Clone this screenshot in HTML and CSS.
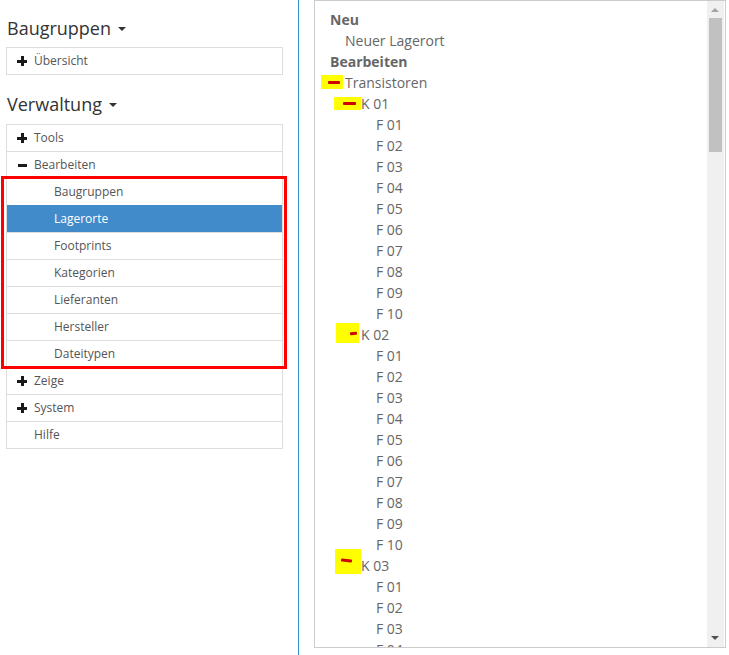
FILE: index.html
```html
<!DOCTYPE html>
<html lang="de">
<head>
    <meta charset="UTF-8">
    <title>Lagerorte</title>
    <link rel="stylesheet" href="styles.css">
</head>
<body>
    <div class="sidebar">
        <h2 class="nav-title">Baugruppen <span class="caret"></span></h2>
        <ul class="nav-list">
            <li><span class="ico plus"></span>Übersicht</li>
        </ul>

        <h2 class="nav-title second">Verwaltung <span class="caret"></span></h2>
        <ul class="nav-list">
            <li><span class="ico plus"></span>Tools</li>
            <li><span class="ico minus"></span>Bearbeiten</li>
            <li class="sub-wrap">
                <ul class="sub-list">
                    <li>Baugruppen</li>
                    <li class="active">Lagerorte</li>
                    <li>Footprints</li>
                    <li>Kategorien</li>
                    <li>Lieferanten</li>
                    <li>Hersteller</li>
                    <li>Dateitypen</li>
                </ul>
            </li>
            <li><span class="ico plus"></span>Zeige</li>
            <li><span class="ico plus"></span>System</li>
            <li class="no-icon">Hilfe</li>
        </ul>
    </div>

    <div class="content">
        <div class="tree-box">
            <div class="tree">
                <div class="t-head">Neu</div>
                <div class="t-item lvl1">Neuer Lagerort</div>
                <div class="t-head">Bearbeiten</div>
                <div class="t-item lvl0"><span class="mark m0"><i></i></span>Transistoren</div>
                <div class="t-item lvl1k"><span class="mark m1"><i></i></span>K 01</div>
                <div class="t-item lvl2">F 01</div>
                <div class="t-item lvl2">F 02</div>
                <div class="t-item lvl2">F 03</div>
                <div class="t-item lvl2">F 04</div>
                <div class="t-item lvl2">F 05</div>
                <div class="t-item lvl2">F 06</div>
                <div class="t-item lvl2">F 07</div>
                <div class="t-item lvl2">F 08</div>
                <div class="t-item lvl2">F 09</div>
                <div class="t-item lvl2">F 10</div>
                <div class="t-item lvl1k"><span class="mark m2"><i></i></span>K 02</div>
                <div class="t-item lvl2">F 01</div>
                <div class="t-item lvl2">F 02</div>
                <div class="t-item lvl2">F 03</div>
                <div class="t-item lvl2">F 04</div>
                <div class="t-item lvl2">F 05</div>
                <div class="t-item lvl2">F 06</div>
                <div class="t-item lvl2">F 07</div>
                <div class="t-item lvl2">F 08</div>
                <div class="t-item lvl2">F 09</div>
                <div class="t-item lvl2">F 10</div>
                <div class="t-item lvl1k"><span class="mark m3"><i></i></span>K 03</div>
                <div class="t-item lvl2">F 01</div>
                <div class="t-item lvl2">F 02</div>
                <div class="t-item lvl2">F 03</div>
                <div class="t-item lvl2">F 04</div>
            </div>
            <div class="scrollbar">
                <div class="arrow up"></div>
                <div class="thumb"></div>
                <div class="track"></div>
                <div class="arrow down"></div>
            </div>
        </div>
    </div>
</body>
</html>
```

FILE: styles.css
```css
* {
    margin: 0;
    padding: 0;
    box-sizing: border-box;
}

body {
    font-family: 'Open Sans', 'Noto Sans', sans-serif;
    background: white;
    display: flex;
    height: 655px;
    overflow: hidden;
}

.sidebar {
    width: 299px;
    flex-shrink: 0;
    padding: 18px 15px 0 6px;
    border-right: 1px solid #2b90c8;
}

.nav-title {
    font-size: 18px;
    font-weight: normal;
    color: #333;
    line-height: 20px;
    margin-bottom: 9px;
    padding-left: 1px;
}

.nav-title.second {
    margin-top: 19px;
    margin-bottom: 10px;
}

.caret {
    display: inline-block;
    width: 0;
    height: 0;
    border-left: 4px solid transparent;
    border-right: 4px solid transparent;
    border-top: 4px solid #333;
    vertical-align: middle;
    margin-left: 2px;
    margin-bottom: 3px;
}

.nav-list {
    list-style: none;
    border: 1px solid #ddd;
    width: 277px;
}

.nav-list > li {
    height: 27px;
    line-height: 26px;
    font-size: 12px;
    color: #555;
    padding-left: 10px;
    border-top: 1px solid #ddd;
    display: flex;
    align-items: center;
}

.nav-list > li:first-child {
    border-top: none;
    height: 26px;
}

.nav-list > li.no-icon {
    padding-left: 27px;
}

.nav-list > li.sub-wrap {
    display: block;
    height: auto;
    padding: 0;
    border-top: none;
    position: relative;
}

.sub-wrap::after {
    content: "";
    position: absolute;
    left: -6px;
    right: -5px;
    top: -2px;
    bottom: -2px;
    border: 3px solid #f00;
}

.sub-list {
    list-style: none;
}

.sub-list li {
    height: 27px;
    line-height: 26px;
    font-size: 12px;
    color: #555;
    padding-left: 47px;
    border-top: 1px solid #ddd;
}

.sub-list li.active {
    background: #428bca;
    color: white;
    border-top-color: #428bca;
}

.ico {
    display: inline-block;
    position: relative;
    width: 10px;
    height: 10px;
    margin-right: 7px;
}

.ico::before,
.ico::after {
    content: "";
    position: absolute;
    background: #1a1a1a;
}

.ico.plus::before {
    left: 0;
    top: 4px;
    width: 10px;
    height: 3px;
}

.ico.plus::after {
    left: 4px;
    top: 0;
    width: 3px;
    height: 10px;
}

.ico.minus::before {
    left: 1px;
    top: 4px;
    width: 9px;
    height: 3px;
}

.ico.minus::after {
    display: none;
}

.content {
    flex: 1;
    padding: 0 2px 0 15px;
}

.tree-box {
    width: 412px;
    height: 648px;
    border: 1px solid #ccc;
    display: flex;
    overflow: hidden;
}

.tree {
    flex: 1;
    padding: 8px 0 0 15px;
    font-size: 14px;
    color: #666;
    line-height: 21px;
    overflow: hidden;
}

.t-head {
    font-weight: bold;
    color: #666;
}

.t-item {
    white-space: nowrap;
    position: relative;
}

.lvl1 { padding-left: 15px; }
.lvl0 { padding-left: 15px; }
.lvl1k { padding-left: 31px; }
.lvl2 { padding-left: 46px; }

.mark {
    position: absolute;
    background: #ffff00;
}

.mark i {
    position: absolute;
    background: #d00000;
    height: 3px;
    border-radius: 1px;
}

.m0 { left: -9px; top: 3px; width: 22px; height: 14px; }
.m0 i { left: 7px; top: 6px; width: 12px; }

.m1 { left: 4px; top: 4px; width: 27px; height: 13px; }
.m1 i { left: 9px; top: 5px; width: 13px; }

.m2 { left: 6px; top: -1px; width: 23px; height: 20px; }
.m2 i { left: 14px; top: 9px; width: 7px; transform: rotate(-8deg); }

.m3 { left: 5px; top: -6px; width: 26px; height: 25px; }
.m3 i { left: 6px; top: 10px; width: 11px; transform: rotate(6deg); }

.scrollbar {
    width: 17px;
    margin-right: 1px;
    background: #f0f0f0;
    display: flex;
    flex-direction: column;
    align-items: center;
}

.arrow {
    height: 17px;
    width: 100%;
    position: relative;
}

.arrow::before {
    content: "";
    position: absolute;
    left: 4px;
    border-left: 4px solid transparent;
    border-right: 4px solid transparent;
}

.arrow.up::before {
    top: 7px;
    border-bottom: 4px solid #a3a3a3;
}

.arrow.down::before {
    top: 6px;
    border-top: 4px solid #505050;
}

.thumb {
    width: 13px;
    height: 134px;
    background: #c1c1c1;
}

.track {
    flex: 1;
}
```
